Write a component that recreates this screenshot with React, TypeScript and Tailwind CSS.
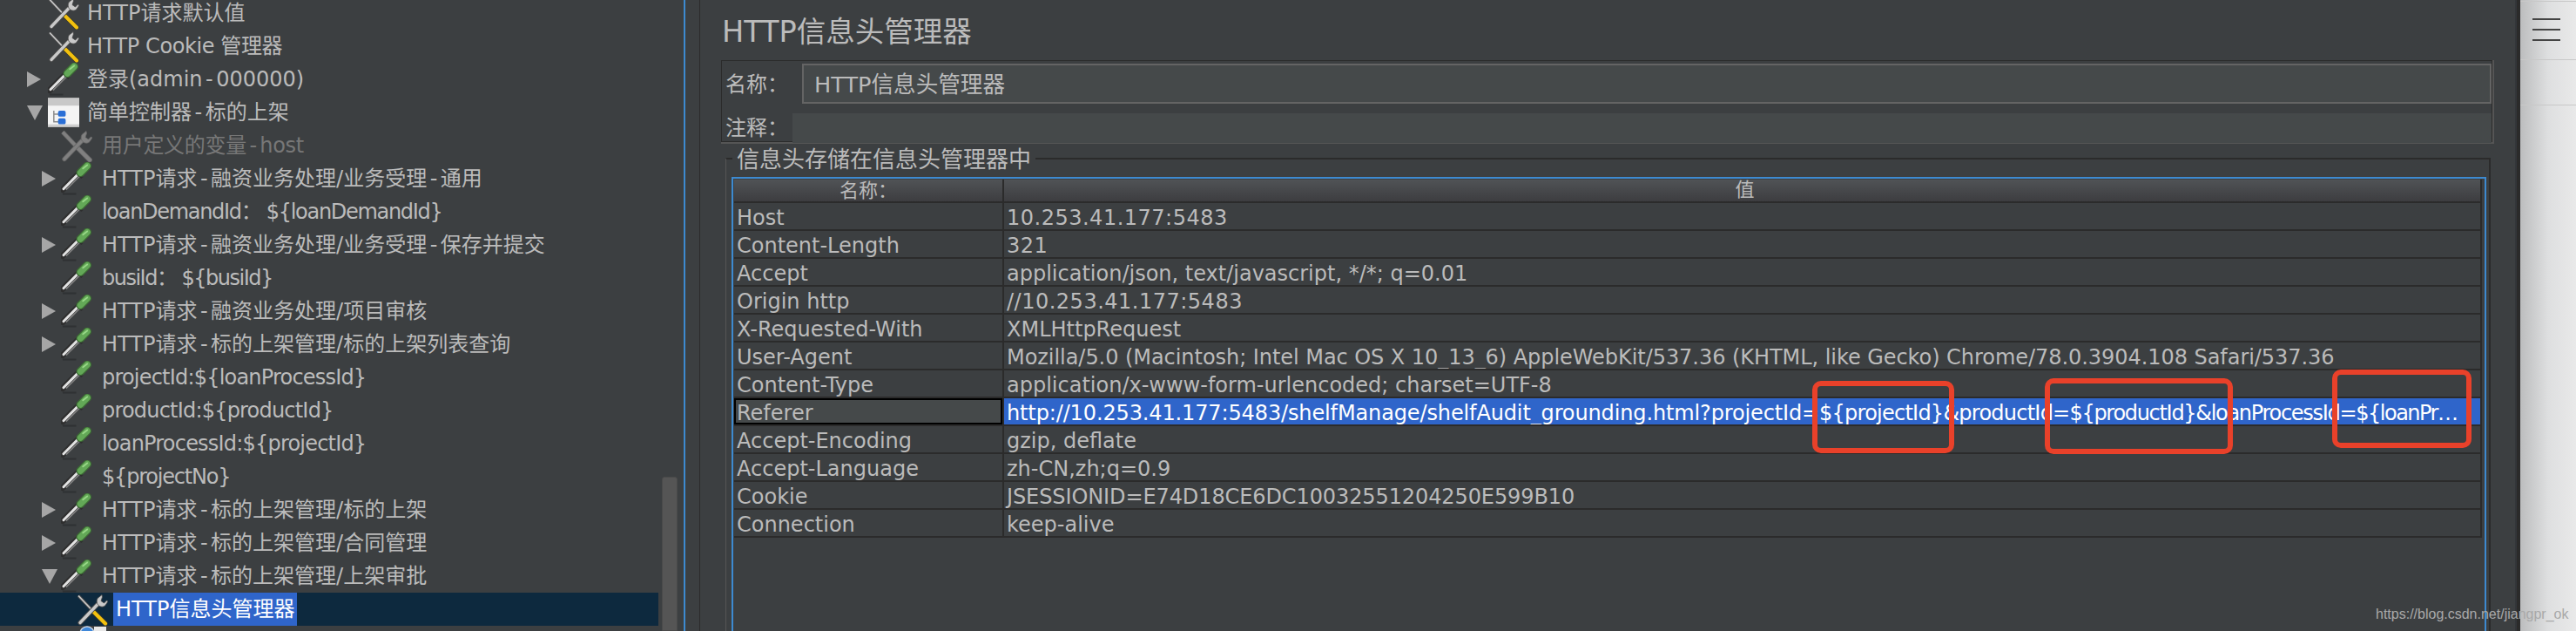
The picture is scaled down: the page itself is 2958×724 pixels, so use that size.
import React from "react";

const FONT = '"DejaVu Sans", "Noto Sans CJK SC", sans-serif';

function Tools({ disabled = false }: { disabled?: boolean }) {
  const steel = disabled ? "#808080" : "#c9c9c9";
  const dark = disabled ? "#666666" : "#4a4a4a";
  const handle = disabled ? "#808080" : "#f3c10e";
  return (
    <svg width="37" height="37" viewBox="0 0 36 36" fill="none">
      <path d="M2 2L19 20" stroke={dark} strokeWidth={disabled ? 5 : 3.4} />
      <path d="M2 2L19 20" stroke={steel} strokeWidth={disabled ? 3.4 : 1.8} />
      <path d="M19 20L33 34" stroke={disabled ? "#666666" : "#3a3a2c"} strokeWidth="5.8" strokeLinecap="round" />
      <path d="M19 20L33 34" stroke={handle} strokeWidth="4" strokeLinecap="round" />
      <path d="M4 33L24 12" stroke={dark} strokeWidth="5.4" strokeLinecap="round" />
      <path d="M4 33L24 12" stroke={steel} strokeWidth="3.4" strokeLinecap="round" />
      <path d="M29 1L24 5C22.5 8 23 11 25 13C27 15 31 15.5 33 13L36 8.5L34.5 7.5L31.5 10.5L28 8L29.5 3.5Z" fill={steel} stroke={dark} strokeWidth="0.8" />
    </svg>
  );
}

function Pipette() {
  return (
    <svg width="37" height="38" viewBox="0 0 37 38" fill="none">
      <path d="M2 37H18" stroke="#2f3133" strokeWidth="2" />
      <path d="M2 32L21 13" stroke="#2e2e2e" strokeWidth="7" strokeLinecap="round" />
      <path d="M3 31L20 14" stroke="#e2e2e2" strokeWidth="3" strokeLinecap="round" />
      <path d="M6 32L22 16" stroke="#808080" strokeWidth="1.6" />
      <path d="M20 12L25 18" stroke="#2e2e2e" strokeWidth="3" />
      <path d="M23 12L31 4" stroke="#3d6b35" strokeWidth="10" strokeLinecap="round" />
      <path d="M23 12L31 4" stroke="#63a857" strokeWidth="7.4" strokeLinecap="round" />
      <path d="M26 7L31 3" stroke="#97d786" strokeWidth="2" strokeLinecap="round" />
    </svg>
  );
}

function Controller() {
  return (
    <svg width="37" height="34" viewBox="0 0 37 34" fill="none">
      <rect width="37" height="34" fill="#f4f4f4" />
      <rect width="37" height="9" fill="#c8c8c8" />
      <rect y="31" width="37" height="3" fill="#cfcfcf" />
      <path d="M7 15V28H13M7 19H13" stroke="#8a8a8a" strokeWidth="1.5" />
      <rect x="12" y="15" width="9" height="7" rx="2" fill="#2a6fd6" />
      <rect x="12" y="24" width="9" height="7" rx="2" fill="#2a6fd6" />
    </svg>
  );
}

function Triangle({ open }: { open?: boolean }) {
  return open ? (
    <svg width="18" height="17" viewBox="0 0 18 17">
      <path d="M0 0H18L9 17Z" fill="#a6a6a6" />
    </svg>
  ) : (
    <svg width="16" height="18" viewBox="0 0 16 18">
      <path d="M0 0L16 9L0 18Z" fill="#a6a6a6" />
    </svg>
  );
}

type Node = {
  level: 0 | 1 | 2;
  icon: "tools" | "pipette" | "ctrl" | "off";
  text: string;
  tri?: "open" | "closed";
  selected?: boolean;
  disabled?: boolean;
  track?: string;
};

const nodes: Node[] = [
  { level: 0, icon: "tools", text: "HTTP请求默认值" },
  { level: 0, icon: "tools", text: "HTTP Cookie 管理器", track: "tracking-[-0.4px]" },
  { level: 0, icon: "pipette", text: "登录(admin-000000)", tri: "closed" },
  { level: 0, icon: "ctrl", text: "简单控制器-标的上架", tri: "open" },
  { level: 1, icon: "off", text: "用户定义的变量-host", disabled: true, track: "tracking-[-0.3px]" },
  { level: 1, icon: "pipette", text: "HTTP请求-融资业务处理/业务受理-通用", tri: "closed" },
  { level: 1, icon: "pipette", text: "loanDemandId： ${loanDemandId}", track: "tracking-[-1.3px]" },
  { level: 1, icon: "pipette", text: "HTTP请求-融资业务处理/业务受理-保存并提交", tri: "closed" },
  { level: 1, icon: "pipette", text: "busiId： ${busiId}", track: "tracking-[-1.5px]" },
  { level: 1, icon: "pipette", text: "HTTP请求-融资业务处理/项目审核", tri: "closed" },
  { level: 1, icon: "pipette", text: "HTTP请求-标的上架管理/标的上架列表查询", tri: "closed" },
  { level: 1, icon: "pipette", text: "projectId:${loanProcessId}", track: "tracking-[-0.8px]" },
  { level: 1, icon: "pipette", text: "productId:${productId}", track: "tracking-[-0.8px]" },
  { level: 1, icon: "pipette", text: "loanProcessId:${projectId}", track: "tracking-[-0.8px]" },
  { level: 1, icon: "pipette", text: "${projectNo}", track: "tracking-[-1.2px]" },
  { level: 1, icon: "pipette", text: "HTTP请求-标的上架管理/标的上架", tri: "closed" },
  { level: 1, icon: "pipette", text: "HTTP请求-标的上架管理/合同管理", tri: "closed" },
  { level: 1, icon: "pipette", text: "HTTP请求-标的上架管理/上架审批", tri: "open" },
  { level: 2, icon: "tools", text: "HTTP信息头管理器", selected: true },
];

function Label({ text }: { text: string }) {
  const parts = text.split("-");
  return (
    <>
      {parts.map((p, i) => (
        <React.Fragment key={i}>
          {i > 0 ? <span className="px-[3.5px]">-</span> : null}
          {p}
        </React.Fragment>
      ))}
    </>
  );
}

function TreeRow({ n }: { n: Node }) {
  const pad = n.level === 0 ? "pl-[31px]" : n.level === 1 ? "pl-[48px]" : "pl-[88px]";
  const triBox = n.level === 0 ? "w-[24px]" : n.level === 1 ? "w-[22px]" : "w-0";
  const gap = n.level === 0 ? "ml-[9px]" : n.level === 1 ? "ml-[11px]" : "ml-[6px]";
  return (
    <div className={`flex h-[38px] shrink-0 items-center ${pad} ${n.selected ? "bg-[#0d293e]" : ""}`}>
      <div className={`flex shrink-0 items-center ${triBox}`}>
        {n.tri ? <Triangle open={n.tri === "open"} /> : null}
      </div>
      <div className="flex w-[36px] shrink-0 items-center justify-center">
        {n.icon === "tools" && <Tools />}
        {n.icon === "off" && <Tools disabled />}
        {n.icon === "pipette" && <Pipette />}
        {n.icon === "ctrl" && <Controller />}
      </div>
      <span
        className={`${gap} whitespace-nowrap text-[24px] leading-[38px] ${n.track ?? ""} ${
          n.selected
            ? "bg-[#2f65ca] px-[3px] text-white"
            : n.disabled
              ? "text-[#777777]"
              : "text-[#bbbbbb]"
        }`}
      >
        <Label text={n.text} />
      </span>
    </div>
  );
}

type H = { k: string; v: React.ReactNode; t: string; sel?: boolean };
const headers: H[] = [
  { k: "Host", v: "10.253.41.177:5483", t: "tracking-[0.5px]" },
  { k: "Content-Length", v: "321", t: "tracking-[0.5px]" },
  { k: "Accept", v: "application/json, text/javascript, */*; q=0.01", t: "tracking-[0px]" },
  { k: "Origin http", v: "//10.253.41.177:5483", t: "tracking-[0.5px]" },
  { k: "X-Requested-With", v: "XMLHttpRequest", t: "tracking-[0px]" },
  { k: "User-Agent", v: "Mozilla/5.0 (Macintosh; Intel Mac OS X 10_13_6) AppleWebKit/537.36 (KHTML, like Gecko) Chrome/78.0.3904.108 Safari/537.36", t: "tracking-[-0.05px]" },
  { k: "Content-Type", v: "application/x-www-form-urlencoded; charset=UTF-8", t: "tracking-[0px]" },
  {
    k: "Referer",
    v: (
      <>
        <span className="tracking-[-0.13px]">http://10.253.41.177:5483/shelfManage/shelfAudit_grounding.html?projectId=</span>
        <span className="tracking-[-0.76px]">{"${projectId}&productId="}</span>
        <span className="tracking-[-1.3px]">{"${productId}&loanProcessId="}</span>
        <span className="tracking-[-1.5px]">{"${loanPr…"}</span>
      </>
    ),
    t: "",
    sel: true,
  },
  { k: "Accept-Encoding", v: "gzip, deflate", t: "tracking-[0px]" },
  { k: "Accept-Language", v: "zh-CN,zh;q=0.9", t: "tracking-[0px]" },
  { k: "Cookie", v: "JSESSIONID=E74D18CE6DC10032551204250E599B10", t: "tracking-[-0.1px]" },
  { k: "Connection", v: "keep-alive", t: "tracking-[0px]" },
];

function TableRow({ h }: { h: H }) {
  return (
    <div className="flex h-[32px] border-b-2 border-[#2b2b2b]">
      <div
        className={`w-[308px] shrink-0 overflow-hidden whitespace-nowrap text-[24px] ${
          h.sel ? "border-2 border-black bg-[#45494a] pl-[1px] leading-[30px]" : "pl-[3px] leading-[34px]"
        }`}
      >
        {h.k}
      </div>
      <div className="w-[2px] shrink-0 bg-[#2b2b2b]" />
      <div
        className={`min-w-0 flex-1 overflow-hidden whitespace-nowrap pl-[3px] text-[24px] leading-[34px] ${h.t} ${
          h.sel ? "bg-[#2f65ca] text-white" : ""
        }`}
      >
        {h.v}
      </div>
      <div className="w-[2px] shrink-0 bg-[#2b2b2b]" />
    </div>
  );
}

export default function App() {
  return (
    <div
      className="relative flex h-[724px] w-[2958px] overflow-hidden bg-[#3c3f41] text-[#bbbbbb]"
      style={{ fontFamily: FONT }}
    >
      {/* tree */}
      <div className="flex h-full w-[785px] shrink-0">
        <div className="mt-[-4px] flex w-[756px] shrink-0 flex-col">
          {nodes.map((n) => (
            <TreeRow key={n.text} n={n} />
          ))}
          <div className="flex h-[38px] shrink-0 pl-[88px]">
            <svg width="36" height="8" viewBox="0 0 36 8">
              <circle cx="12" cy="9" r="8" fill="#3f87d8" stroke="#c9d6e6" strokeWidth="1.5" />
              <rect x="20" y="1" width="14" height="7" fill="#e8e8e8" />
            </svg>
          </div>
        </div>
        <div className="ml-[4px] mt-[547px] w-[18px] rounded-t-[3px] border border-[#4a4a4a] bg-[#555555]" />
      </div>
      <div className="w-[2px] shrink-0 bg-[#3d8ad0]" />
      <div className="w-[17px] shrink-0 border-r border-[#2b2b2b]" />

      {/* right panel */}
      <div className="flex w-[2084px] shrink-0 flex-col pl-[24px]">
        <div className="flex h-[69px] shrink-0 items-center pl-[1px] pt-[5px] text-[33.5px] leading-none">
          HTTP信息头管理器
        </div>

        {/* name and comment */}
        <div className="flex h-[94px] w-[2034px] shrink-0 flex-col border border-[#2b2b2b] shadow-[1px_1px_0_1px_#555555]">
          <div className="flex h-[60px] shrink-0 pt-[3px]">
            <div className="w-[92px] shrink-0 pl-[4px] text-[24px] leading-[48px]">名称：</div>
            <div className="h-[46px] flex-1 border-2 border-[#646464] bg-[#45494a] pl-[12px] text-[25.6px] leading-[44px]">
              HTTP信息头管理器
            </div>
          </div>
          <div className="flex flex-1">
            <div className="w-[81px] shrink-0 pl-[4px] text-[24px] leading-[34px]">注释：</div>
            <div className="flex-1 bg-[#45494a]" />
          </div>
        </div>

        {/* fieldset */}
        <div className="relative ml-[5px] mt-[18px] flex w-[2027px] flex-1 flex-col border-l border-r-2 border-t-2 border-[#2b2b2b] border-l-[#555555] pl-[6px] pr-[3px] pt-[20px]">
          <span className="absolute left-[7px] top-[-15px] bg-[#3c3f41] px-[5px] text-[26px] leading-[30px]">
            信息头存储在信息头管理器中
          </span>
          <div className="flex-1 border-l-2 border-r-2 border-t-2 border-[#3d8ad0] pl-[1px] pr-[3px] pt-[1px]">
            <div className="flex h-[27px] border-b-2 border-[#2b2b2b] bg-linear-to-b from-[#505356] to-[#3d3d40]">
              <div className="w-[308px] shrink-0 text-center text-[22px] leading-[26px]">名称：</div>
              <div className="w-[2px] shrink-0 bg-[#2b2b2b]" />
              <div className="flex-1 pl-[6px] text-center text-[22px] leading-[24px]">值</div>
              <div className="w-[2px] shrink-0 bg-[#2b2b2b]" />
            </div>
            {headers.map((h) => (
              <TableRow key={h.k} h={h} />
            ))}
          </div>
        </div>
      </div>

      <div className="w-[2px] shrink-0 bg-[#33363a]" />
      <div className="w-[4px] shrink-0 bg-[#2b2b2b]" />

      {/* light side */}
      <div className="flex min-w-0 flex-1 flex-col bg-linear-to-r from-[#bcbdbe] via-[#dedfe0] to-[#e9e9e9] pt-[1px]">
        <div className="flex h-[68px] shrink-0 flex-col gap-[10px] border-b border-t border-[#c8c8c8] pl-[14px] pt-[19px]">
          <div className="h-[2px] w-[32px] bg-[#444444]" />
          <div className="h-[2px] w-[32px] bg-[#444444]" />
          <div className="h-[2px] w-[32px] bg-[#444444]" />
        </div>
        <div className="h-[52px] shrink-0 border-b border-[#c8c8c8]" />
      </div>

      {/* annotations */}
      <div className="absolute left-[2081px] top-[437px] h-[83px] w-[163px] rounded-[10px] border-[6px] border-[#e9412a]" />
      <div className="absolute left-[2348px] top-[434px] h-[87px] w-[216px] rounded-[10px] border-[6px] border-[#e9412a]" />
      <div className="absolute left-[2678px] top-[424px] h-[90px] w-[160px] rounded-[10px] border-[6px] border-[#e9412a]" />
      <div
        className="absolute left-[2728px] top-[695px] whitespace-nowrap text-[16px] leading-[20px] text-[#a9a9a9]"
        style={{ fontFamily: '"Liberation Sans", sans-serif' }}
      >
        https://blog.csdn.net/jiangpr_ok
      </div>
    </div>
  );
}
